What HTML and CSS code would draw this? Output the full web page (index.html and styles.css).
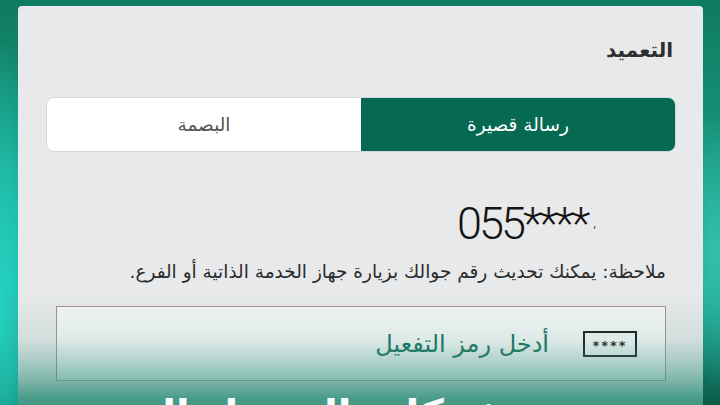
FILE: index.html
```html
<!DOCTYPE html>
<html lang="ar" dir="rtl">
<head>
<meta charset="utf-8">
<link rel="stylesheet" href="styles.css">
</head>
<body>
<div class="stage">
  <div class="card">
    <h2 class="title">التعميد</h2>
    <div class="segmented">
      <div class="seg seg-active">رسالة قصيرة</div>
      <div class="seg">البصمة</div>
    </div>
    <div class="phone-row">
      <span class="phone" dir="ltr">055****<span class="comma">,</span></span>
    </div>
    <p class="note">ملاحظة: يمكنك تحديث رقم جوالك بزيارة جهاز الخدمة الذاتية أو الفرع.</p>
    <div class="code-input">
      <span class="code-icon">****</span>
      <span class="code-label">أدخل رمز التفعيل</span>
    </div>
    <div class="fade">
      <div class="caption">شركات التمويل التي</div>
    </div>
  </div>
</div>
</body>
</html>
```
FILE: styles.css
```css
html, body {
  margin: 0;
  padding: 0;
  width: 720px;
  height: 405px;
  overflow: hidden;
}
body {
  font-family: "DejaVu Sans", sans-serif;
}
.stage {
  width: 720px;
  height: 405px;
  padding-top: 6px;
  box-sizing: border-box;
  background:
    radial-gradient(ellipse 50px 260px at 0px 300px, #25d2c2 0%, rgba(37,210,194,0.6) 50%, rgba(37,210,194,0) 100%),
    radial-gradient(ellipse 40px 140px at 715px 250px, #33bfaa 0%, rgba(51,191,170,0) 100%),
    linear-gradient(180deg, #0f7b61 0%, #16957c 40%, #1ca996 70%, #0b5c49 100%);
  display: flex;
  justify-content: center;
}
.card {
  position: relative;
  width: 685px;
  margin-left: 1px;
  height: 420px;
  background: #e8e9ea;
  border-radius: 4px;
  box-sizing: border-box;
  padding: 30px 27px 0 28px;
  display: flex;
  flex-direction: column;
  overflow: hidden;
}
.title {
  margin: 0 3px 0 0;
  font-size: 20px;
  font-weight: bold;
  color: #2e2e2e;
  line-height: 28px;
  height: 28px;
}
.segmented {
  margin-top: 33px;
  height: 55px;
  display: flex;
  border-radius: 8px;
  overflow: hidden;
  border: 1px solid #d4d6d8;
  box-sizing: border-box;
}
.seg {
  flex: 1;
  display: flex;
  align-items: center;
  justify-content: center;
  font-size: 18.5px;
  color: #555;
  background: #ffffff;
}
.seg-active {
  background: #066a53;
  color: #ffffff;
}
.phone-row {
  margin-top: 44px;
  height: 52px;
  display: flex;
  padding-right: 80px;
}
.phone {
  font-family: Roboto, sans-serif;
  font-weight: 300;
  font-size: 45px;
  letter-spacing: -3px;
  color: #141414;
  line-height: 52px;
}
.comma {
  font-size: 14px;
  letter-spacing: 0;
  margin-left: 6px;
  vertical-align: 12px;
}
.note {
  margin: 11px 10px 0 0;
  font-size: 18.5px;
  color: #2b2b2b;
  line-height: 26px;
}
.code-input {
  margin: 21px 10px 0 10px;
  height: 75px;
  box-sizing: border-box;
  border: 1.5px solid #b08c8c;
  background: #f5f6f6;
  display: flex;
  align-items: center;
  padding-right: 28px;
  gap: 34px;
}
.code-icon {
  width: 54px;
  height: 26px;
  box-sizing: border-box;
  border: 2.5px solid #1c1c1c;
  display: flex;
  align-items: center;
  justify-content: center;
  font-size: 13px;
  letter-spacing: 2px;
  color: #1c1c1c;
  font-weight: bold;
  padding-top: 4px;
}
.code-label {
  font-size: 24px;
  color: #17705a;
}
.fade {
  position: absolute;
  left: 0;
  right: 0;
  bottom: 0;
  height: 135px;
  background: linear-gradient(180deg,
    rgba(60,150,130,0) 0%,
    rgba(60,150,130,0.03) 11%,
    rgba(62,152,133,0.13) 36%,
    rgba(62,152,133,0.42) 55%,
    rgba(60,150,130,0.64) 67%,
    rgba(58,148,128,0.92) 80%,
    rgba(55,145,125,1) 100%);
}
.caption {
  position: absolute;
  right: 195px;
  top: 103px;
  font-size: 40px;
  font-weight: bold;
  color: #ffffff;
  white-space: nowrap;
  line-height: 40px;
}
```
